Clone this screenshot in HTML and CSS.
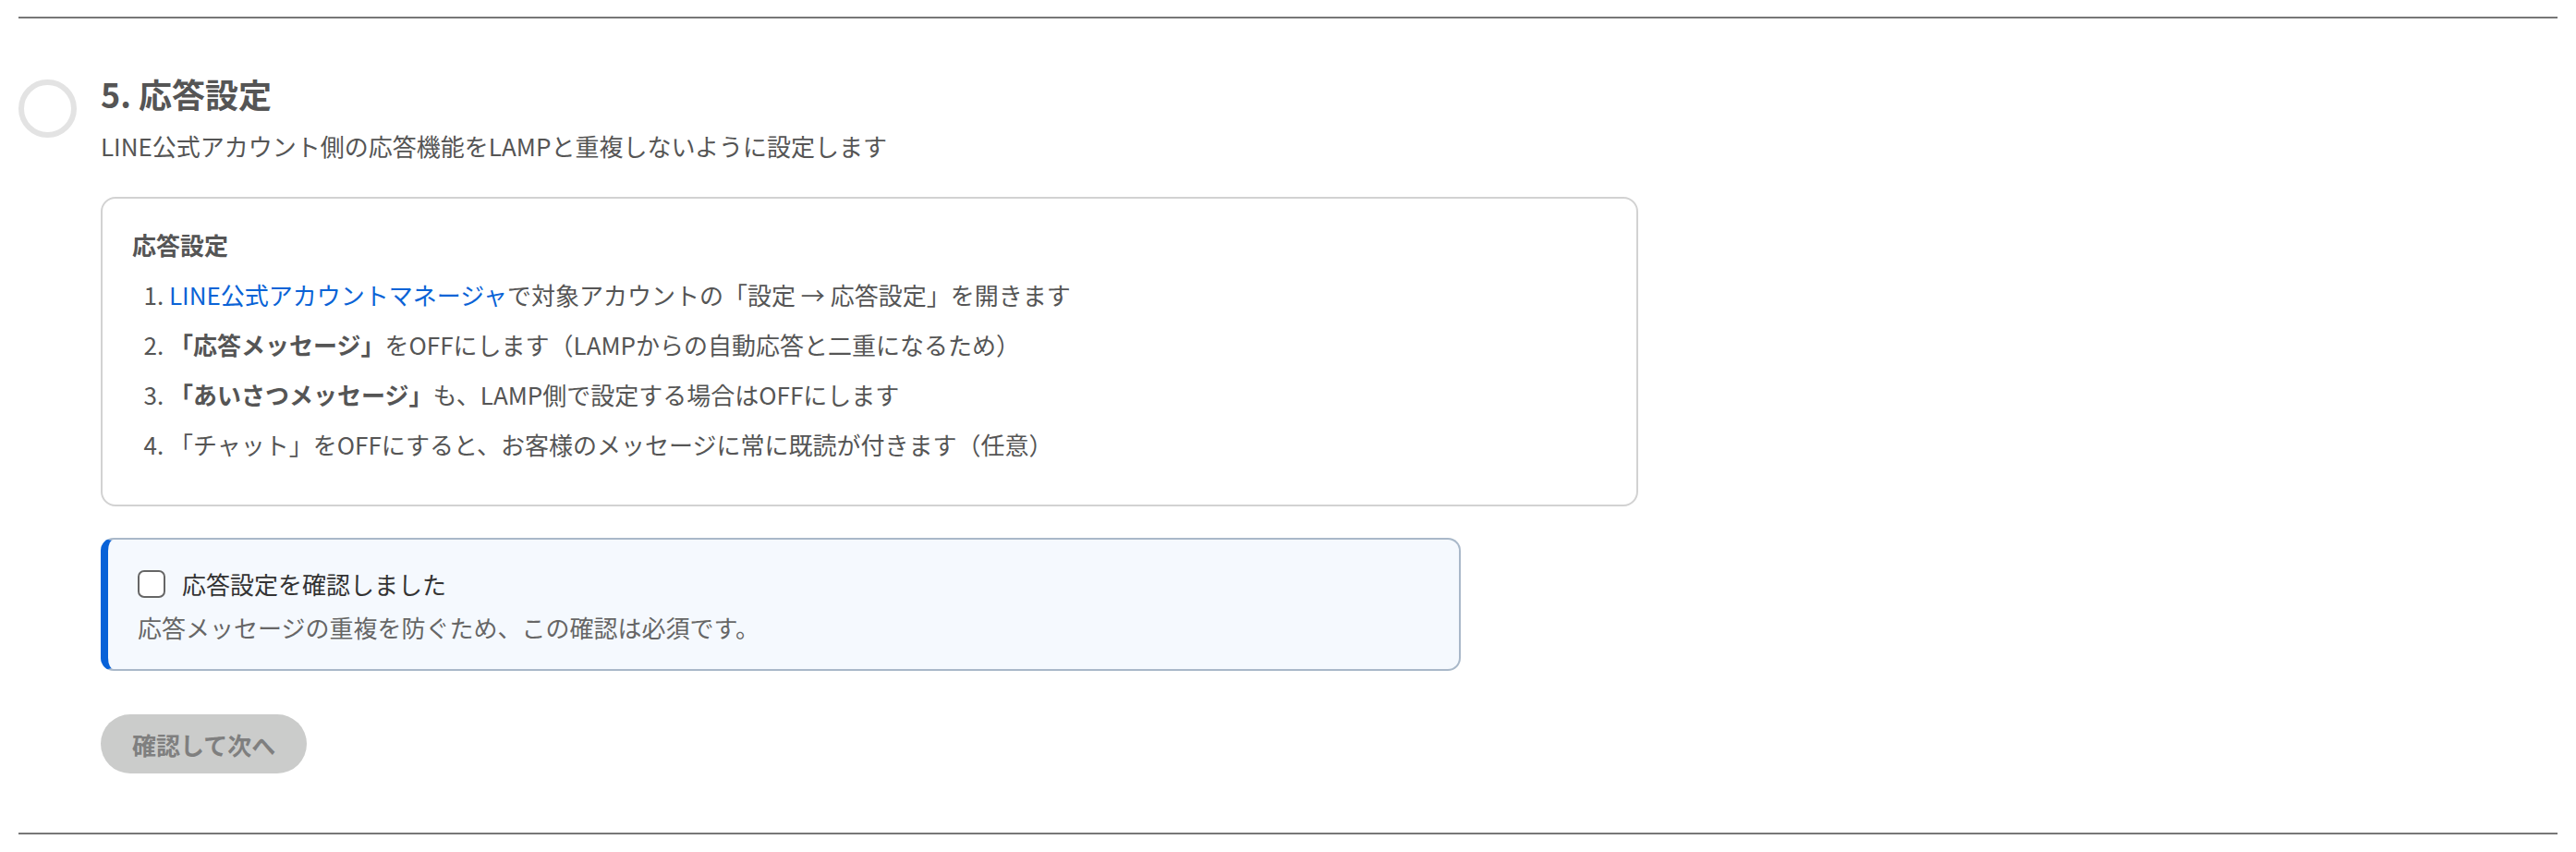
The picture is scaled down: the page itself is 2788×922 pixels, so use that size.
FILE: index.html
```html
<!DOCTYPE html>
<html lang="ja">
<head>
    <meta charset="UTF-8">
    <title>応答設定</title>
    <link rel="stylesheet" href="styles.css">
</head>
<body>
    <div id="page">
        <hr class="divider divider-top">
        <section class="step">
            <div class="step-marker"></div>
            <div class="step-body">
                <h2 class="step-title">5. 応答設定</h2>
                <p class="step-desc">LINE公式アカウント側の応答機能をLAMPと重複しないように設定します</p>

                <div class="guide-card">
                    <h3 class="guide-title">応答設定</h3>
                    <ol class="guide-list">
                        <li><a href="#" class="guide-link">LINE公式アカウントマネージャ</a>で対象アカウントの「設定 → 応答設定」を開きます</li>
                        <li><strong>「応答メッセージ」</strong>をOFFにします（LAMPからの自動応答と二重になるため）</li>
                        <li><strong>「あいさつメッセージ」</strong>も、LAMP側で設定する場合はOFFにします</li>
                        <li>「チャット」をOFFにすると、お客様のメッセージに常に既読が付きます（任意）</li>
                    </ol>
                </div>

                <div class="confirm-box">
                    <label class="confirm-label">
                        <input type="checkbox" id="confirmCheck">
                        <span>応答設定を確認しました</span>
                    </label>
                    <p class="confirm-note">応答メッセージの重複を防ぐため、この確認は必須です。</p>
                </div>

                <button id="nextButton" disabled>確認して次へ</button>
            </div>
        </section>
        <hr class="divider divider-bottom">
    </div>

    <script>
        const confirmCheck = document.getElementById('confirmCheck');
        const nextButton = document.getElementById('nextButton');
        confirmCheck.addEventListener('change', () => {
            nextButton.disabled = !confirmCheck.checked;
        });
    </script>
</body>
</html>
```

FILE: styles.css
```css
:root {
    --text-main: #555;
    --text-dark: #333;
    --text-sub: #666;
    --link-blue: #0a63d6;
    --accent-blue: #0862d8;
    --line-gray: #777;
}
* {
    box-sizing: border-box;
}
body {
    margin: 0;
    background: #fff;
    font-family: "Noto Sans CJK JP", "Noto Sans", sans-serif;
    color: var(--text-main);
    font-size: 26px;
}
#page {
    padding: 0 20px;
}
.divider {
    border: none;
    height: 2px;
    background-color: var(--line-gray);
    margin: 0;
}
.divider-top {
    margin-top: 18px;
}
.divider-bottom {
    margin-top: 64px;
}
.step {
    display: flex;
    gap: 26px;
    margin-top: 56px;
}
.step-marker {
    flex: none;
    width: 63px;
    height: 63px;
    margin-top: 10px;
    border: 6px solid #e3e3e3;
    border-radius: 50%;
}
.step-body {
    flex: none;
    width: 1664px;
}
.step-title {
    margin: 0 0 11px;
    font-size: 36px;
    line-height: 50px;
    font-weight: bold;
    color: var(--text-main);
}
.step-desc {
    margin: 0 0 34px;
    line-height: 42px;
}
.guide-card {
    border: 2px solid #d2d2d2;
    border-radius: 16px;
    padding: 32px 32px 31px;
}
.guide-title {
    margin: 0 0 16px;
    font-size: 26px;
    line-height: 36px;
    font-weight: bold;
}
.guide-list {
    margin: 0;
    padding-left: 40px;
}
.guide-list li {
    line-height: 40px;
    margin-bottom: 14px;
}
.guide-list strong {
    font-weight: bold;
}
.guide-link {
    color: var(--link-blue);
    text-decoration: none;
}
.confirm-box {
    width: 1472px;
    margin-top: 34px;
    background-color: #f5f9fe;
    border: 2px solid #a9b8c9;
    border-left: 8px solid var(--accent-blue);
    border-radius: 14px;
    padding: 28px 32px 25px;
}
.confirm-label {
    display: flex;
    align-items: center;
    gap: 18px;
    line-height: 40px;
    color: var(--text-dark);
    cursor: pointer;
}
.confirm-label input {
    appearance: none;
    -webkit-appearance: none;
    margin: 0;
    width: 30px;
    height: 30px;
    border: 2px solid #666;
    border-radius: 7px;
    background: #fff;
    cursor: pointer;
}
.confirm-label input:checked {
    background: var(--accent-blue);
    border-color: var(--accent-blue);
}
.confirm-note {
    margin: 7px 0 0;
    line-height: 40px;
    color: var(--text-sub);
}
#nextButton {
    display: block;
    margin-top: 47px;
    height: 64px;
    padding: 0 34px;
    border: none;
    border-radius: 32px;
    background-color: #cbcccb;
    color: #7f7f7f;
    font-family: inherit;
    font-size: 26px;
    font-weight: bold;
    cursor: not-allowed;
}
#nextButton:not(:disabled) {
    background-color: var(--accent-blue);
    color: #fff;
    cursor: pointer;
}
```
